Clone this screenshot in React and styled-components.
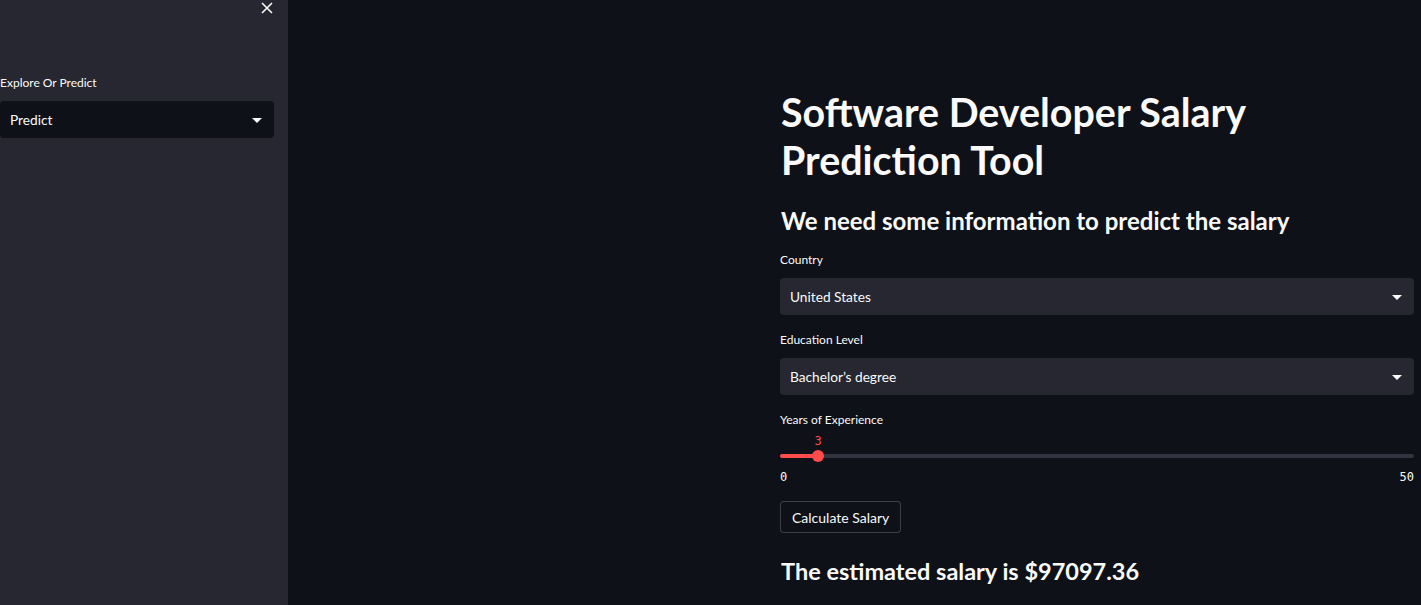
import React from 'react'
import styled, { createGlobalStyle } from 'styled-components'

const GlobalStyle = createGlobalStyle`
    html, body {
        margin: 0;
        padding: 0;
        background: #0e1117;
    }
    body {
        font-family: Lato, "Noto Sans", sans-serif;
        color: #fafafa;
    }
`;

const Page = styled.div`
    display: flex;
    width: 1421px;
    height: 605px;
    overflow: hidden;
    background: #0e1117;
`;

const Sidebar = styled.aside`
    width: 288px;
    flex-shrink: 0;
    background: #262730;
    display: flex;
    flex-direction: column;
    padding: 0 14px 0 0;
    box-sizing: border-box;
`;

const CloseRow = styled.div`
    display: flex;
    justify-content: flex-end;
    padding: 1px 0 0;
    height: 74px;
`;

const CloseButton = styled.button`
    background: none;
    border: none;
    padding: 0;
    width: 14px;
    height: 14px;
    color: #fafafa;
    cursor: pointer;
    display: flex;
`;

const Main = styled.main`
    flex: 1;
    display: flex;
    justify-content: flex-end;
    padding: 88px 7px 0 0;
`;

const Content = styled.div`
    width: 634px;
    display: flex;
    flex-direction: column;
`;

const Title = styled.h1`
    margin: 0 0 0 1px;
    font-size: 39.4px;
    line-height: 48px;
    font-weight: 700;
`;

const Subheader = styled.h3`
    margin: 21px 0 0 1px;
    font-size: 24px;
    line-height: 32px;
    font-weight: 700;
`;

const Field = styled.div`
    display: flex;
    flex-direction: column;
    margin-top: ${p => p.$gap || 0}px;
`;

const Label = styled.label`
    font-size: 12px;
    line-height: 16px;
    margin-bottom: ${p => p.$tight ? 6 : 10}px;
    color: #fafafa;
`;

const SelectBox = styled.div`
    height: 37px;
    border-radius: 4px;
    background: ${p => p.$dark ? '#0e1117' : '#262730'};
    display: flex;
    align-items: center;
    justify-content: space-between;
    padding: 0 12px 0 10px;
    font-size: 13.7px;
    color: #fafafa;
`;

const Caret = styled.span`
    width: 0;
    height: 0;
    border-left: 5px solid transparent;
    border-right: 5px solid transparent;
    border-top: 5px solid #fafafa;
    margin-top: 1px;
`;

const SliderValue = styled.div`
    font-family: "DejaVu Sans Mono", monospace;
    font-size: 12px;
    line-height: 14px;
    color: #ff4b4b;
    position: relative;
    height: 14px;
`;

const Track = styled.div`
    position: relative;
    height: 4px;
    margin-top: 6px;
    border-radius: 2px;
    background: #31333f;
`;

const TrackFill = styled.div`
    height: 100%;
    border-radius: 2px;
    background: #ff4b4b;
`;

const Thumb = styled.div`
    position: absolute;
    top: 50%;
    width: 12px;
    height: 12px;
    border-radius: 50%;
    background: #ff4b4b;
    transform: translate(-50%, -50%);
`;

const TickRow = styled.div`
    display: flex;
    justify-content: space-between;
    margin-top: 12px;
    font-family: "DejaVu Sans Mono", monospace;
    font-size: 12px;
    line-height: 14px;
    color: #fafafa;
`;

const Button = styled.button`
    align-self: flex-start;
    margin-top: 17px;
    height: 32px;
    padding: 0 11px;
    border: 1px solid rgba(250, 250, 250, 0.2);
    border-radius: 4px;
    background: #0e1117;
    color: #fafafa;
    font-family: inherit;
    font-size: 14px;
    cursor: pointer;
`;

const Result = styled.h3`
    margin: 22px 0 0 1px;
    font-size: 23.5px;
    line-height: 32px;
    font-weight: 700;
`;

const Select = ({ value, dark }) => (
    <SelectBox $dark={dark}>
        <span>{value}</span>
        <Caret />
    </SelectBox>
);

const Slider = ({ min, max, value }) => {
    const pct = ((value - min) / (max - min)) * 100;
    return (
        <>
            <SliderValue>
                <span style={{ position: 'absolute', left: `${pct}%`, transform: 'translateX(-50%)' }}>{value}</span>
            </SliderValue>
            <Track>
                <TrackFill style={{ width: `${pct}%` }} />
                <Thumb style={{ left: `${pct}%` }} />
            </Track>
            <TickRow>
                <span>{min}</span>
                <span>{max}</span>
            </TickRow>
        </>
    );
};

export default function App() {
    return (
        <>
            <GlobalStyle />
            <Page>
                <Sidebar>
                    <CloseRow>
                        <CloseButton aria-label="Close sidebar">
                            <svg width="14" height="14" viewBox="0 0 14 14" fill="none" stroke="currentColor" strokeWidth="1.6">
                                <path d="M2 2 L12 12 M12 2 L2 12" />
                            </svg>
                        </CloseButton>
                    </CloseRow>
                    <Field>
                        <Label>Explore Or Predict</Label>
                        <Select value="Predict" dark />
                    </Field>
                </Sidebar>
                <Main>
                    <Content>
                        <Title>Software Developer Salary<br />Prediction Tool</Title>
                        <Subheader>We need some information to predict the salary</Subheader>
                        <Field $gap={15}>
                            <Label>Country</Label>
                            <Select value="United States" />
                        </Field>
                        <Field $gap={17}>
                            <Label>Education Level</Label>
                            <Select value="Bachelor’s degree" />
                        </Field>
                        <Field $gap={17}>
                            <Label $tight>Years of Experience</Label>
                            <Slider min={0} max={50} value={3} />
                        </Field>
                        <Button>Calculate Salary</Button>
                        <Result>The estimated salary is $97097.36</Result>
                    </Content>
                </Main>
            </Page>
        </>
    );
}
